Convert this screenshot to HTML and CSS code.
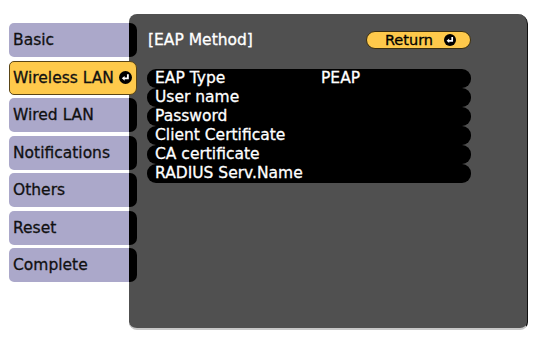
FILE: index.html
```html
<!DOCTYPE html>
<html>
  <head>
    <title>EAP Method</title>
    <link rel="stylesheet" href="styles.css">
  </head>
  <body>
    <main class="screen">
      <nav class="menu">
        <div class="tab">Basic</div>
        <div class="tab active">Wireless LAN
          <svg class="enter" viewBox="0 0 12 12"><circle cx="6" cy="6" r="6" fill="#000"/><path d="M8.2 3v3.8H4.6" fill="none" stroke="#fff" stroke-width="1.7"/><path d="M2.6 6.8l2.6-2.3v4.6z" fill="#fff"/></svg>
        </div>
        <div class="tab">Wired LAN</div>
        <div class="tab">Notifications</div>
        <div class="tab">Others</div>
        <div class="tab">Reset</div>
        <div class="tab">Complete</div>
      </nav>
      <section class="panel">
        <div class="panel-head">
          <span class="title">[EAP Method]</span>
          <span class="return">Return
            <svg class="enter" viewBox="0 0 12 12"><circle cx="6" cy="6" r="6" fill="#000"/><path d="M8.2 3v3.8H4.6" fill="none" stroke="#fff" stroke-width="1.7"/><path d="M2.6 6.8l2.6-2.3v4.6z" fill="#fff"/></svg>
          </span>
        </div>
        <div class="rows">
          <div class="row"><span class="label">EAP Type</span><span class="value">PEAP</span></div>
          <div class="row"><span class="label">User name</span></div>
          <div class="row"><span class="label">Password</span></div>
          <div class="row"><span class="label">Client Certificate</span></div>
          <div class="row"><span class="label">CA certificate</span></div>
          <div class="row"><span class="label">RADIUS Serv.Name</span></div>
        </div>
      </section>
    </main>
  </body>
</html>
```
FILE: styles.css
```css
html, body {
  margin: 0;
  padding: 0;
  background: #ffffff;
  font: normal 15.5px "DejaVu Sans", Verdana, sans-serif;
  -webkit-text-stroke: 0.3px;
}

.screen {
  display: flex;
  align-items: flex-start;
  padding: 14px 0 0 9px;
}

.menu {
  position: relative;
  z-index: 1;
  display: flex;
  flex-direction: column;
  gap: 3.5px;
  width: 128px;
  padding-top: 9px;
}

.tab {
  display: flex;
  align-items: center;
  height: 34px;
  padding-left: 4px;
  box-sizing: border-box;
  color: #111111;
  border-radius: 5px 7px 7px 5px;
  background: linear-gradient(to right, #aba8ca 120px, #000000 120px);
}

.tab.active {
  background: #fec94b;
  border: 1px solid #5a4516;
  padding: 0 4px 0 3px;
}

.tab.active .enter {
  margin-left: auto;
  width: 13px;
  height: 13px;
}

.enter {
  width: 12px;
  height: 12px;
  flex: none;
}

.panel {
  width: 399px;
  height: 316px;
  margin-left: -8px;
  padding: 17px 0 0 18px;
  box-sizing: border-box;
  background: #505050;
  border-radius: 8px 10px 8px 8px;
  border-right: 1px solid #111111;
  border-bottom: 2px solid #c8c8c8;
  color: #ffffff;
}

.panel-head {
  display: flex;
  align-items: center;
  justify-content: space-between;
  width: 324px;
  height: 18px;
}

.title {
  padding-left: 1px;
}

.return {
  display: flex;
  align-items: center;
  justify-content: center;
  gap: 11px;
  width: 105px;
  height: 18px;
  box-sizing: border-box;
  padding-left: 4px;
  color: #000000;
  background: #fec94b;
  border: 1px solid #3a2e10;
  border-radius: 9px;
  font-size: 14.5px;
}

.rows {
  width: 324px;
  margin-top: 20px;
}

.row {
  display: flex;
  height: 19px;
  line-height: 19px;
  padding-left: 8px;
  background: #000000;
  border-radius: 9px;
}

.label {
  width: 166px;
}
```
